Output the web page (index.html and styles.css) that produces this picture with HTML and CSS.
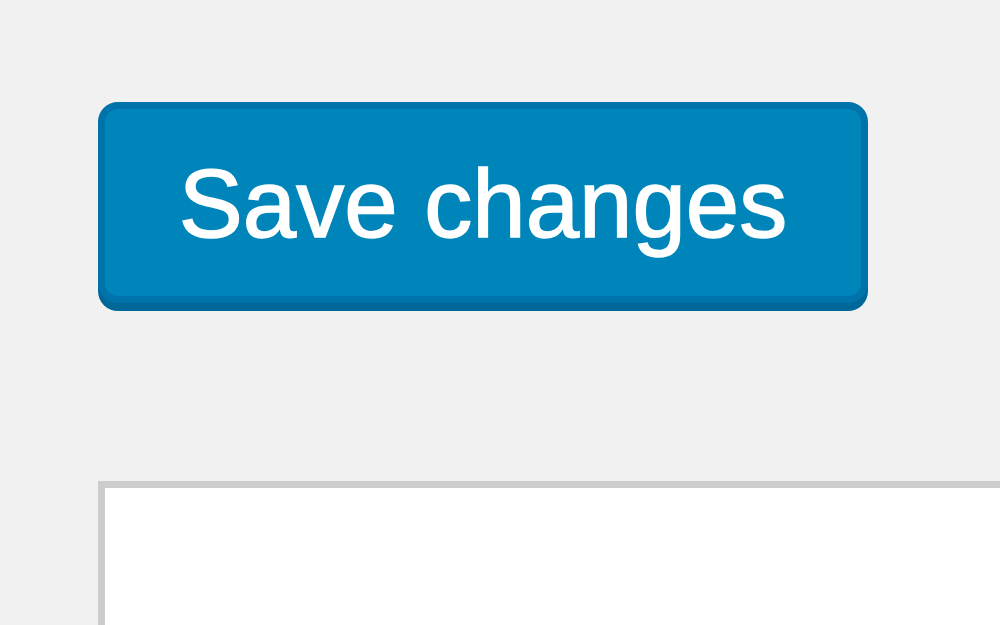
FILE: index.html
```html
<!DOCTYPE html>
<html>
<head>
<meta charset="utf-8">
<link rel="stylesheet" href="styles.css">
</head>
<body>
<main class="page">
  <button class="btn-primary" type="button">Save changes</button>
  <section class="panel"></section>
</main>
</body>
</html>
```

FILE: styles.css
```css
html, body {
  margin: 0;
  padding: 0;
  background: #f1f1f1;
  overflow: hidden;
  width: 1000px;
  height: 625px;
}
.page {
  box-sizing: border-box;
  width: 1000px;
  height: 625px;
  display: flex;
  flex-direction: column;
  align-items: flex-start;
  padding: 102px 0 0 98px;
}
.btn-primary {
  box-sizing: border-box;
  width: 770px;
  height: 201px;
  padding: 2px 0 0 0;
  margin: 0;
  background: #0085ba;
  border: 7px solid #0073aa;
  border-radius: 20px;
  box-shadow: 0 8px 0 #006799;
  color: #ffffff;
  font-family: "Liberation Sans", Arial, sans-serif;
  font-size: 96px;
  line-height: 186px;
  text-align: center;
  white-space: nowrap;
  -webkit-text-stroke: 1.5px #ffffff;
}
.panel {
  box-sizing: border-box;
  margin-top: 178px;
  width: 902px;
  flex: 1;
  background: #ffffff;
  border-top: 7px solid #cccccc;
  border-left: 7px solid #cccccc;
}
```
